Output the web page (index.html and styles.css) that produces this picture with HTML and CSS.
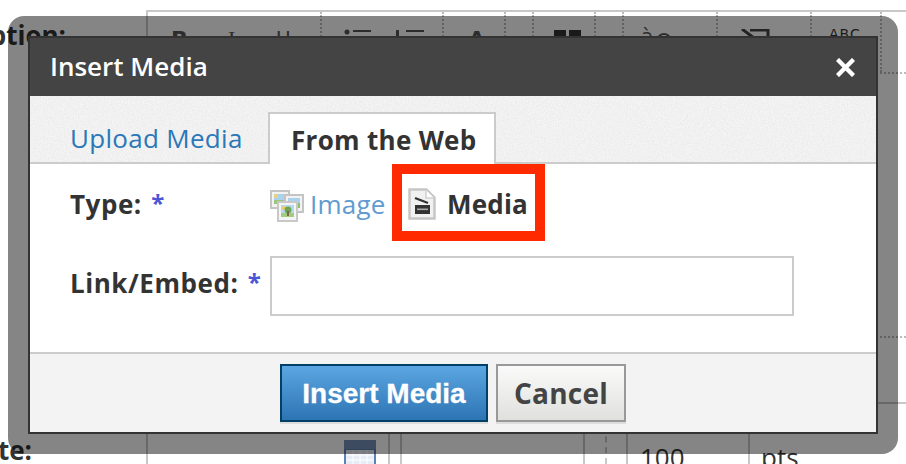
FILE: index.html
```html
<!DOCTYPE html>
<html lang="en">
<head>
<meta charset="utf-8">
<title>Insert Media</title>
<link rel="stylesheet" href="styles.css">
</head>
<body>
<div class="page">
  <div class="row-top">
    <div class="page-label label-caption">Caption:</div>
    <div class="editor">
      <div class="toolbar">
        <div class="cell cell-a"><span class="tb-b">B</span><span class="tb-i">I</span><span class="tb-u">U</span></div>
        <div class="cell cell-b">
          <svg class="tb-icon" width="92" height="8" viewBox="0 0 92 8"><circle cx="4" cy="3" r="2.5" fill="#555"/><rect x="10" y="1" width="18" height="2" fill="#555"/><rect x="53" y="1" width="3" height="7" fill="#555"/><rect x="63" y="1" width="18" height="2" fill="#555"/></svg>
        </div>
        <div class="cell cell-c"><span class="tb-a">A</span></div>
        <div class="cell cell-d"></div>
        <div class="cell cell-e"><svg class="tb-icon2" width="32" height="8" viewBox="0 0 32 8"><rect x="2" y="0" width="12" height="8" fill="#333"/><rect x="17" y="0" width="12" height="8" fill="#333"/></svg></div>
        <div class="cell cell-f"></div>
        <div class="cell cell-g"><span class="tb-ao">à</span><svg class="tb-o" width="16" height="6" viewBox="0 0 16 6"><path d="M2 6a6 5 0 0 1 12 0" fill="none" stroke="#555" stroke-width="2"/></svg></div>
        <div class="cell cell-g"><svg class="tb-icon3" width="32" height="10" viewBox="0 0 32 10"><path d="M2 0l12 9M10 1h18v8" fill="none" stroke="#444" stroke-width="3"/></svg></div>
        <div class="cell cell-h"><span class="tb-abc">ABC</span></div>
        <div class="cell cell-i"></div>
      </div>
      <div class="editor-main"></div>
      <div class="editor-foot"></div>
    </div>
  </div>
  <div class="row-bottom">
    <div class="page-label label-date">Date:</div>
    <div class="date-cells">
      <div class="dcell dcell-a">
        <svg class="calendar" width="32" height="26" viewBox="0 0 32 26"><rect x="0" y="0" width="32" height="26" fill="#5f82b4"/><rect x="0" y="0" width="32" height="9" fill="#7591b8"/><rect x="2" y="10" width="28" height="16" fill="#e6edf7"/><path d="M2 15h28M2 20h28M9 10v16M16 10v16M23 10v16" stroke="#fff" stroke-width="1"/></svg>
      </div>
      <div class="dcell dcell-b"></div>
      <div class="dcell dcell-c"></div>
      <div class="dcell dcell-d"></div>
      <div class="dcell dcell-e"></div>
      <div class="dcell dcell-f">100</div>
      <div class="dcell dcell-g">pts</div>
    </div>
  </div>
</div>

<div class="overlay"></div>

<div class="modal">
  <header class="modal-title">
    <h1 class="modal-heading">Insert Media</h1>
    <svg class="close-icon" width="19" height="19" viewBox="0 0 19 19"><path d="M3 3l13 13M16 3L3 16" stroke="#fff" stroke-width="4.4" stroke-linecap="square" fill="none"/></svg>
  </header>
  <nav class="tabs">
    <svg class="noise" width="100%" height="100%"><filter id="grain"><feTurbulence type="fractalNoise" baseFrequency="0.7" numOctaves="2" seed="4"/><feColorMatrix values="0 0 0 0 0.5  0 0 0 0 0.5  0 0 0 0 0.5  0 0 0 0.35 -0.1"/></filter><rect width="100%" height="100%" filter="url(#grain)"/></svg>
    <a class="tab">Upload Media</a>
    <a class="tab tab-active">From the Web</a>
  </nav>
  <section class="form">
    <div class="field-label">Type: <span class="req">*</span></div>
    <div class="type-options">
      <span class="type-option type-image">
        <svg class="icon-image" width="34" height="32" viewBox="0 0 34 32">
          <g>
            <rect x="1" y="1" width="18" height="17" fill="#f2f2f2" stroke="#c4c4c4" stroke-width="2"/><rect x="4" y="4" width="12" height="10" fill="#a9d2ee"/><rect x="4" y="10" width="12" height="4" fill="#9cc47c"/><circle cx="6" cy="6" r="2" fill="#f2d26a"/>
            <rect x="15" y="5" width="18" height="17" fill="#f2f2f2" stroke="#c4c4c4" stroke-width="2"/><rect x="18" y="8" width="12" height="10" fill="#a9d2ee"/><rect x="18" y="13" width="12" height="5" fill="#8fbf73"/>
            <rect x="8" y="12" width="19" height="19" fill="#f5f5f5" stroke="#c8c8c8" stroke-width="2"/><rect x="11" y="15" width="13" height="12" fill="#b5d9f0"/><rect x="11" y="23" width="13" height="4" fill="#a3cc82"/><circle cx="14" cy="18" r="2" fill="#f2c95a"/><circle cx="18" cy="20" r="3.4" fill="#6fa552"/><rect x="17" y="21" width="2" height="5" fill="#7a6a45"/>
          </g>
        </svg>
        <span class="type-text">Image</span>
      </span>
      <span class="type-option type-media">
        <svg class="icon-media" width="28" height="32" viewBox="0 0 28 32">
          <path d="M1.5 1.5h17l8 8v21h-25z" fill="#f1f1f1" stroke="#c6c6c6" stroke-width="2.4"/>
          <path d="M18 2v8h8" fill="#fff" stroke="#cfcfcf" stroke-width="1.5"/>
          <path d="M7 10l13 5" stroke="#333" stroke-width="2.4" fill="none"/>
          <rect x="7" y="17" width="15" height="9" fill="#333"/>
          <rect x="9" y="20.5" width="11" height="1.6" fill="#aaa"/>
        </svg>
        <span class="type-text">Media</span>
      </span>
    </div>
    <label class="field-label field-label-mid" for="embed">Link/Embed: <span class="req">*</span></label>
    <input class="text-input" id="embed" type="text">
    <div class="highlight"></div>
  </section>
  <footer class="modal-foot">
    <button class="btn btn-primary" type="button">Insert Media</button>
    <button class="btn btn-secondary" type="button">Cancel</button>
  </footer>
</div>
</body>
</html>
```

FILE: styles.css
```css
* { box-sizing: border-box; }

html, body {
  margin: 0;
  padding: 0;
  width: 906px;
  height: 464px;
  overflow: hidden;
  background: #fff;
  font-family: "Open Sans", "Liberation Sans", sans-serif;
  color: #333;
}

body { position: relative; }

/* Page behind the dialog */
.page {
  display: flex;
  flex-direction: column;
  height: 464px;
  padding-top: 10px;
}

.row-top { display: flex; height: 394px; }
.row-bottom { display: flex; height: 60px; }

.page-label {
  display: flex;
  justify-content: flex-end;
  font-size: 26px;
  font-weight: 700;
  white-space: nowrap;
  color: #333;
}

.label-caption { width: 66px; margin-right: 80px; padding-top: 7px; }
.label-date { width: 32px; margin-right: 114px; height: 60px; padding-top: 28px; line-height: 36px; }

.editor {
  flex: 1;
  display: flex;
  flex-direction: column;
  border-top: 2px solid #c8c8c8;
  border-left: 2px solid #c8c8c8;
}

.toolbar {
  display: flex;
  height: 62px;
  border-bottom: 2px dotted #bbb;
}

.cell { position: relative; border-right: 2px dotted #bbb; height: 60px; flex: none; }
.cell-a { width: 174px; }
.cell-b { width: 122px; }
.cell-c { width: 62px; }
.cell-d { width: 28px; }
.cell-e { width: 62px; }
.cell-f { width: 28px; }
.cell-g { width: 94px; }
.cell-h { width: 70px; }
.cell-i { flex: 1; border-right: 0; }

.tb-b, .tb-i, .tb-u, .tb-a, .tb-ao, .tb-abc {
  position: absolute;
  color: #555;
  font-family: "DejaVu Sans", sans-serif;
  line-height: 1;
}
.tb-b { left: 23px; top: 17px; font-size: 22px; font-weight: 700; }
.tb-i { left: 80px; top: 16px; font-size: 22px; font-family: "Liberation Serif", serif; }
.tb-u { left: 128px; top: 16px; font-size: 20px; }
.tb-a { left: 25px; top: 16px; font-size: 20px; font-weight: 700; }
.tb-ao { left: 17px; top: 14px; font-size: 20px; }
.tb-o { position: absolute; left: 32px; top: 21px; }
.tb-abc { left: 17px; top: 15px; font-size: 14px; letter-spacing: 1px; color: #333; }
.tb-icon { position: absolute; left: 21px; top: 17px; }
.tb-icon2 { position: absolute; left: 18px; top: 18px; }
.tb-icon3 { position: absolute; left: 22px; top: 17px; }

.editor-main { height: 264px; flex: none; border-bottom: 2px dotted #bbb; }
.editor-foot { flex: 1; border-bottom: 2px solid #c8c8c8; }

.date-cells { flex: 1; display: flex; }
.dcell { height: 60px; flex: none; border-left: 2px solid #c8c8c8; font-size: 26px; color: #333; }
.dcell-a { width: 242px; position: relative; }
.dcell-b { width: 12px; }
.dcell-c { width: 183px; }
.dcell-d { width: 22px; }
.dcell-e { width: 21px; border-left: 2px dashed #c8c8c8; }
.dcell-f { width: 122px; padding: 37px 0 0 12px; line-height: 32px; }
.dcell-g { padding: 37px 0 0 11px; line-height: 32px; }
.calendar { position: absolute; left: 196px; top: 36px; }

/* Dimming layer */
.overlay {
  position: absolute;
  left: 8px;
  top: 16px;
  width: 890px;
  height: 438px;
  border-radius: 16px;
  background: rgba(0, 0, 0, 0.48);
}

/* Dialog */
.modal {
  position: absolute;
  left: 28px;
  top: 36px;
  width: 850px;
  height: 398px;
  border: 2px solid #333;
  background: #fff;
  display: flex;
  flex-direction: column;
}

.modal-title {
  height: 58px;
  flex: none;
  background: #444;
  display: flex;
  align-items: center;
  justify-content: space-between;
  padding: 0 21px 0 20px;
}

.modal-heading {
  margin: 0;
  font-size: 26px;
  font-weight: 600;
  color: #fff;
  line-height: 56px;
  height: 58px;
}

.close-icon { display: block; }

.tabs {
  position: relative;
  height: 68px;
  flex: none;
  background: #f5f5f5;
  border-bottom: 2px solid #ccc;
  display: flex;
  align-items: flex-end;
  padding-left: 40px;
}

.noise { position: absolute; left: 0; top: 0; }

.tab {
  position: relative;
  font-size: 26px;
  letter-spacing: 0.3px;
  color: #2a78b8;
  line-height: 34px;
  width: 198px;
  padding-bottom: 7px;
}

.tab-active {
  width: 228px;
  height: 52px;
  margin-bottom: -2px;
  padding: 9px 0 0 21px;
  background: #fff;
  border: 2px solid #ccc;
  border-bottom: 0;
  font-weight: 700;
  color: #333;
}

.form {
  position: relative;
  flex: 1;
  display: grid;
  grid-template-columns: 200px 524px;
  grid-template-rows: 36px 60px;
  row-gap: 34px;
  padding: 22px 0 0 40px;
}

.field-label {
  font-size: 26px;
  letter-spacing: 0.55px;
  font-weight: 700;
  color: #333;
  line-height: 36px;
}

.field-label-mid { align-self: center; padding-bottom: 6px; }

.req { color: #4a55d8; margin-left: 2px; font-size: 24px; position: relative; top: -2px; }

.type-options { display: flex; align-items: center; }

.type-option { display: flex; align-items: center; }
.type-image { color: #5f9bd0; width: 138px; }
.type-media { font-weight: 700; color: #333; }

.icon-image { margin: 4px 6px 0 0; flex: none; filter: blur(0.5px); }
.icon-media { margin-right: 11px; flex: none; filter: blur(0.5px); }

.type-text { font-size: 26px; letter-spacing: 0.2px; line-height: 36px; }

.text-input {
  width: 524px;
  height: 60px;
  border: 2px solid #ccc;
  background: #fff;
  padding: 0 10px;
  border-radius: 0;
  outline: 0;
}

.highlight {
  position: absolute;
  left: 362px;
  top: 0;
  width: 153px;
  height: 77px;
  border: 10px solid #ff2a00;
  pointer-events: none;
}

.modal-foot {
  height: 80px;
  flex: none;
  background: #f3f3f3;
  border-top: 2px solid #ccc;
  display: flex;
  justify-content: center;
  gap: 8px;
  padding-top: 10px;
}

.btn {
  height: 58px;
  padding: 0;
  border-radius: 0;
  box-shadow: 0 2px 0 #ddd;
  cursor: pointer;
}

.btn-primary {
  width: 208px;
  border: 2px solid #003f66;
  background: linear-gradient(#5ba6e2, #2d74b3);
  color: #fff;
  font-family: "Liberation Sans", Arial, sans-serif;
  font-size: 28px;
  font-weight: 700;
  padding-top: 2px;
  -webkit-text-stroke: 0.3px #fff;
}

.btn-secondary {
  width: 130px;
  border: 2px solid #999;
  background: linear-gradient(#fafafa, #e0e0df);
  color: #444;
  font-family: "Open Sans", sans-serif;
  font-size: 28px;
  letter-spacing: 0.2px;
  font-weight: 700;
}
```
